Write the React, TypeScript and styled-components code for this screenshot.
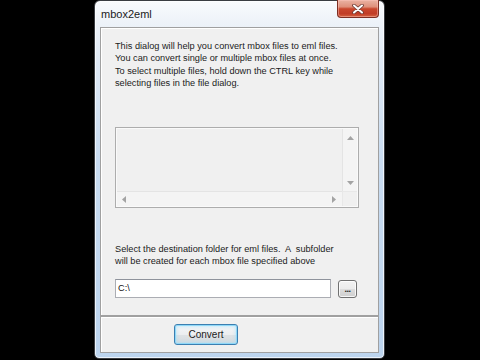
import React from "react";
import styled, { createGlobalStyle } from "styled-components";

const Global = createGlobalStyle`
  html, body { margin: 0; padding: 0; background: #000; }
  body { font-family: "Liberation Sans", Arial, sans-serif; }
  * { box-sizing: border-box; }
`;

const Desktop = styled.div`
  width: 480px;
  height: 360px;
  background: #000;
  display: flex;
  align-items: flex-start;
  padding-left: 94px;
`;

const Window = styled.div`
  width: 291px;
  height: 359px;
  border: 1px solid #3a3d42;
  border-radius: 6px 6px 5px 5px;
  background: linear-gradient(180deg, #f9fbfd 0px, #eef3f9 20px, #dfe9f5 60px, #c9dcf1 160px, #bcd4ee 100%);
  box-shadow: inset 0 0 0 1px rgba(255, 255, 255, 0.7);
  display: flex;
  flex-direction: column;
`;

const TitleBar = styled.div`
  height: 26px;
  display: flex;
  justify-content: space-between;
  align-items: flex-start;
  padding: 0 5px 0 6px;
`;

const Title = styled.span`
  font-size: 11px;
  line-height: 26px;
  color: #1a1a1a;
`;

const CloseButton = styled.div`
  width: 42px;
  height: 18px;
  margin-top: -1px;
  border: 1px solid #7d2e22;
  border-top: none;
  border-radius: 0 0 4px 4px;
  background: linear-gradient(180deg, #eab3a3 0%, #df907b 40%, #c9472d 52%, #c13d27 80%, #d4623f 100%);
  box-shadow: inset 0 0 0 1px rgba(255, 200, 190, 0.45);
  display: flex;
  align-items: center;
  justify-content: center;
`;

const Client = styled.div`
  flex: 1;
  margin: 0 5px 5px 5px;
  background: #f0f0f0;
  display: flex;
  flex-direction: column;
`;

const Panel = styled.div<{ $h: number }>`
  height: ${(p) => p.$h}px;
  border: 1px solid #a0a0a0;
  box-shadow: inset 1px 1px 0 #ffffff;
  display: flex;
  flex-direction: column;
`;

const MainPanel = styled(Panel)`
  padding: 12px 0 0 14px;
`;

const FooterPanel = styled(Panel)`
  justify-content: center;
  padding-left: 73px;
`;

const Text = styled.p<{ $mt: number }>`
  margin: ${(p) => p.$mt}px 0 0 0;
  font-size: 9.2px;
  line-height: 12.3px;
  color: #1b1b1b;
  white-space: pre;
`;

const ListBox = styled.div`
  margin-top: 38px;
  width: 244px;
  height: 81px;
  border: 1px solid #adadad;
  background: #f0f0f0;
  box-shadow: inset 0 0 0 1px #fafafa;
  display: grid;
  grid-template-columns: 1fr 15px;
  grid-template-rows: 1fr 15px;
  padding: 1px;
`;

const VScroll = styled.div`
  background: #f4f4f4;
  border-left: 1px solid #e4e4e4;
  display: flex;
  flex-direction: column;
  justify-content: space-between;
  align-items: center;
  padding: 7px 0 6px;
`;

const HScroll = styled.div`
  background: #f4f4f4;
  border-top: 1px solid #e4e4e4;
  display: flex;
  justify-content: space-between;
  align-items: center;
  padding: 0 6px 0 5px;
`;

const Corner = styled.div`
  background: #f0f0f0;
  border-top: 1px solid #e8e8e8;
  border-left: 1px solid #e8e8e8;
`;

const Arrow = styled.svg`
  display: block;
`;

const InputRow = styled.div`
  margin-top: 11px;
  display: flex;
  align-items: flex-start;
  gap: 7px;
`;

const PathInput = styled.div`
  width: 216px;
  height: 19px;
  background: #fff;
  border: 1px solid #abadb3;
  border-top-color: #8f939c;
  font-size: 9.2px;
  line-height: 17px;
  padding-left: 2px;
  color: #111;
`;

const BrowseButton = styled.div`
  width: 19px;
  height: 18px;
  margin-top: 1px;
  border: 1px solid #707070;
  border-radius: 3px;
  background: linear-gradient(180deg, #f2f2f2 0%, #ebebeb 50%, #dddddd 51%, #cfcfcf 100%);
  box-shadow: inset 0 0 0 1px rgba(255, 255, 255, 0.8);
  font-size: 9px;
  font-weight: bold;
  line-height: 16px;
  text-align: center;
  color: #222;
  letter-spacing: -0.5px;
`;

const ConvertButton = styled.div`
  width: 64px;
  height: 21px;
  border: 1px solid #3c7fb1;
  border-radius: 3px;
  background: linear-gradient(180deg, #f4f6f8 0%, #eceef0 50%, #dfe3e6 51%, #d4dade 100%);
  box-shadow: inset 0 0 0 1px #8fd8f8, inset 0 0 3px 2px rgba(150, 220, 250, 0.45);
  font-size: 10px;
  line-height: 19px;
  text-align: center;
  color: #1a1a1a;
`;

const Up = () => (
  <Arrow width="7" height="4" viewBox="0 0 7 4">
    <path d="M3.5 0 L7 4 L0 4 Z" fill="#a3a3a3" />
  </Arrow>
);
const Down = () => (
  <Arrow width="7" height="4" viewBox="0 0 7 4">
    <path d="M0 0 L7 0 L3.5 4 Z" fill="#a3a3a3" />
  </Arrow>
);
const Left = () => (
  <Arrow width="4" height="7" viewBox="0 0 4 7">
    <path d="M4 0 L4 7 L0 3.5 Z" fill="#a3a3a3" />
  </Arrow>
);
const Right = () => (
  <Arrow width="4" height="7" viewBox="0 0 4 7">
    <path d="M0 0 L4 3.5 L0 7 Z" fill="#a3a3a3" />
  </Arrow>
);

export default function App() {
  return (
    <>
      <Global />
      <Desktop>
        <Window>
          <TitleBar>
            <Title>mbox2eml</Title>
            <CloseButton>
              <svg width="12" height="10" viewBox="0 0 12 10">
                <path d="M2 1.5 L10 8.5 M10 1.5 L2 8.5" stroke="#6b3a33" strokeWidth="3.6" strokeLinecap="round" />
                <path d="M2 1.5 L10 8.5 M10 1.5 L2 8.5" stroke="#ffffff" strokeWidth="2" strokeLinecap="round" />
              </svg>
            </CloseButton>
          </TitleBar>
          <Client>
            <MainPanel $h={289}>
              <Text $mt={0}>
                {"This dialog will help you convert mbox files to eml files.\nYou can convert single or multiple mbox files at once.\nTo select multiple files, hold down the CTRL key while\nselecting files in the file dialog."}
              </Text>
              <ListBox>
                <div />
                <VScroll>
                  <Up />
                  <Down />
                </VScroll>
                <HScroll>
                  <Left />
                  <Right />
                </HScroll>
                <Corner />
              </ListBox>
              <Text $mt={35}>
                {"Select the destination folder for eml files.  A  subfolder\nwill be created for each mbox file specified above"}
              </Text>
              <InputRow>
                <PathInput>C:\</PathInput>
                <BrowseButton>...</BrowseButton>
              </InputRow>
            </MainPanel>
            <FooterPanel $h={37}>
              <ConvertButton>Convert</ConvertButton>
            </FooterPanel>
          </Client>
        </Window>
      </Desktop>
    </>
  );
}
